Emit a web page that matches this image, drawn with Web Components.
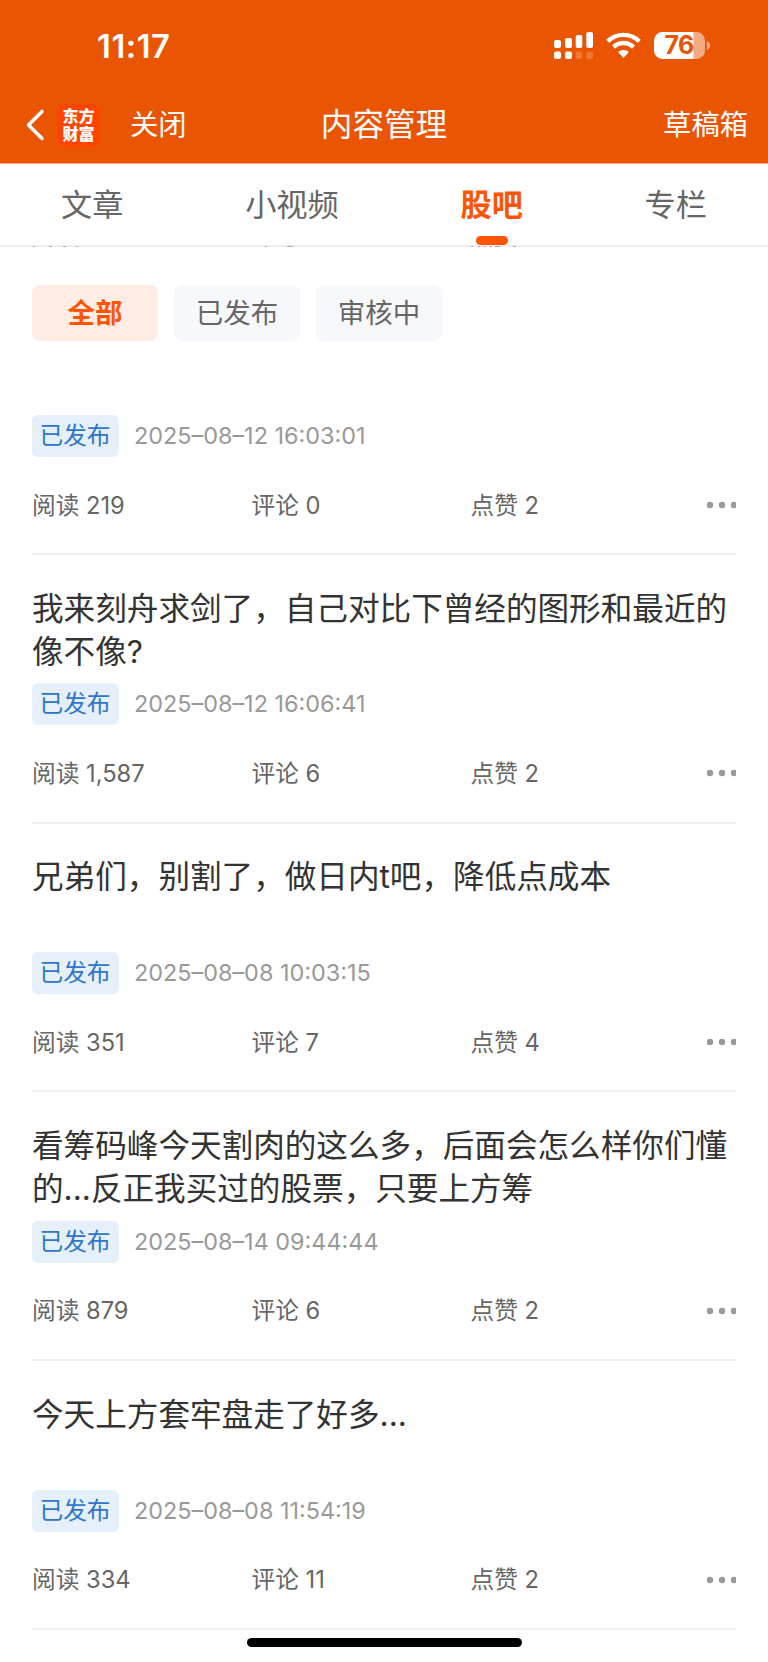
<!DOCTYPE html>
<html lang="zh-CN">
<head>
<meta charset="utf-8">
<meta name="viewport" content="width=device-width, initial-scale=1">
<title>内容管理</title>
<style>
  body {
    margin: 0;
    background: #fff;
    font-family: Inter, "Noto Sans CJK SC", sans-serif;
    color: #333;
  }
</style>
</head>
<body>
<content-manager></content-manager>

<script>
/**
 * Base class: clones the static `html` of the subclass into an open shadow root.
 */
class BaseElement extends HTMLElement {
  constructor() {
    super();
    this.attachShadow({ mode: "open" });
    const template = document.createElement("template");
    template.innerHTML = this.constructor.html;
    this.shadowRoot.appendChild(template.content.cloneNode(true));
  }
}

/** Clock, signal, wifi and battery. */
class StatusBar extends BaseElement {
  static html = `
    <style>
      :host {
        display: flex;
        justify-content: space-between;
        align-items: center;
        height: 90px;
        padding: 0 56px 0 97px;
        box-sizing: border-box;
        color: #fff;
      }
      .time { font-size: 32.600px; font-weight: 600; line-height: 40px; letter-spacing: 0.600px; padding-top: 1px; }
      svg { display: block; }
    </style>
    <span class="time">11:17</span>
    <svg width="158" height="28" viewBox="0 0 158 28" fill="#fff">
      <rect x="-1" y="9" width="7" height="8" rx="2" transform="translate(1)"/>
      <rect x="11" y="7" width="7" height="10" rx="2"/>
      <rect x="21.700" y="4" width="6.600" height="13" rx="2"/>
      <rect x="32.300" y="1" width="6.700" height="16" rx="2"/>
      <rect x="0" y="20.500" width="7" height="7.500" rx="2"/>
      <rect x="11" y="20.500" width="7" height="7.500" rx="2"/>
      <rect x="21.700" y="20.500" width="6.600" height="7.500" rx="2" opacity=".2"/>
      <rect x="32.300" y="20.500" width="6.700" height="7.500" rx="2" opacity=".2"/>
      <g fill="none" stroke="#fff" stroke-width="4.400">
        <path d="M53.700 10.400a22.400 22.400 0 0 1 31.600 0"/>
        <path d="M59.500 16.100a14.200 14.200 0 0 1 20 0"/>
      </g>
      <path d="M64.100 21.100a7.800 7.800 0 0 1 10.800 0L69.500 26.900z"/>
      <path d="M108.500 1h31v27h-31a8.500 8.500 0 0 1-8.500-8.500v-10a8.500 8.500 0 0 1 8.500-8.500z"/>
      <path d="M139 1h3.500a8.500 8.500 0 0 1 8.500 8.500v10a8.500 8.500 0 0 1-8.500 8.500h-3.500z" opacity=".5"/>
      <path d="M152.800 10c4.400 1.500 4.400 7.500 0 9z" opacity=".5"/>
      <text x="125" y="23.300" text-anchor="middle" font-family="Inter" font-size="25" font-weight="700" letter-spacing="-.8" fill="#ea5504">76</text>
    </svg>`;
}

/** Title bar with back button, app badge and the drafts link. */
class NavBar extends BaseElement {
  static html = `
    <style>
      :host {
        display: grid;
        grid-template-columns: 1fr auto 1fr;
        align-items: center;
        height: 73px;
        padding: 0 20px 3px;
        box-sizing: border-box;
        color: #fff;
      }
      .left { display: flex; align-items: center; padding-left: 5px; }
      .back { display: block; margin-right: 12px; }
      .logo {
        width: 43px;
        height: 43px;
        border-radius: 9px;
        background: #ff4400;
        display: grid;
        place-content: center;
        font-size: 16px;
        font-weight: 800;
        line-height: 18px;
        text-align: center;
        margin-right: 30px;
      }
      .text { font-size: 28.300px; line-height: 40px; }
      h1 { margin: 0; font-size: 31.600px; font-weight: 400; line-height: 44px; }
      .right { justify-self: end; }
    </style>
    <div class="left">
      <svg class="back" width="20" height="34" viewBox="0 0 20 34" fill="none" stroke="#fff" stroke-width="3.600" stroke-linecap="round" stroke-linejoin="round">
        <path d="M17 3.500L3.500 17 17 30.500"/>
      </svg>
      <div class="logo"><span>东方</span><span>财富</span></div>
      <span class="text">关闭</span>
    </div>
    <h1><slot></slot></h1>
    <span class="text right">草稿箱</span>`;
}

/** One tab; the `active` attribute gives it the underline. */
class TabItem extends BaseElement {
  static html = `
    <style>
      :host {
        display: flex;
        flex-direction: column;
        align-items: center;
        justify-content: space-between;
        box-sizing: border-box;
        height: 81px;
        padding-top: 19px;
        font-size: 31.200px;
        line-height: 44px;
        color: #666;
      }
      i { display: block; width: 32px; height: 9px; border-radius: 4.500px; }
      :host([active]) { color: #ff5500; font-weight: 700; }
      :host([active]) i { background: #ff5500; }
    </style>
    <span><slot></slot></span>
    <i></i>`;
}

class TabBar extends BaseElement {
  static html = `
    <style>
      :host {
        display: flex;
        justify-content: space-between;
        padding: 0 61px;
        background: #fff;
        border-bottom: 2px solid #eee;
      }
    </style>
    <slot></slot>`;
}

class FilterChip extends BaseElement {
  static html = `
    <style>
      :host {
        display: block;
        width: 126px;
        height: 56px;
        border-radius: 8px;
        background: #f7f8fb;
        color: #666;
        font-size: 27.500px;
        line-height: 56px;
        text-align: center;
      }
      :host([active]) { background: #ffece5; color: #ff5500; font-weight: 700; }
    </style>
    <slot></slot>`;
}

/**
 * One post of the list.
 * Attributes: time, reads, comments, likes, cut (the title is scrolled away).
 */
class PostItem extends BaseElement {
  static html = `
    <style>
      :host {
        display: block;
        box-sizing: border-box;
        height: 268.700px;
        padding-top: 31.600px;
        border-bottom: 2px solid #eee;
      }
      :host([cut]) { height: 140px; padding-top: 0; }
      :host([cut]) .title { display: none; }
      .title {
        height: 86.600px;
        margin-bottom: 10.300px;
        font-size: 31.600px;
        line-height: 43.300px;
        color: #333;
      }
      .meta { display: flex; align-items: center; gap: 15px; height: 42px; }
      .state {
        width: 87px;
        height: 42px;
        border-radius: 6px;
        background: #e5f0fb;
        color: #2e75cc;
        font-size: 23.700px;
        line-height: 41px;
        text-align: center;
        text-indent: -1px;
      }
      .time { font-size: 23.400px; line-height: 42px; color: #999; }
      .stats {
        display: grid;
        grid-template-columns: 219.500px 219px 1fr auto;
        align-items: center;
        height: 40px;
        margin-top: 28px;
        font-size: 23.700px;
        color: #666;
      }
      .stats span { padding-bottom: 3px; }
      svg { display: block; }
    </style>
    <div class="title"><slot></slot></div>
    <div class="meta">
      <span class="state">已发布</span>
      <span class="time"></span>
    </div>
    <div class="stats">
      <span class="reads"></span>
      <span class="comments"></span>
      <span class="likes"></span>
      <svg width="30" height="8" viewBox="0 0 30 8" fill="#999">
        <circle cx="4" cy="4" r="3.200"/>
        <circle cx="16" cy="4" r="3.200"/>
        <circle cx="28" cy="4" r="3.200"/>
      </svg>
    </div>`;

  connectedCallback() {
    const set = (name, label = "") => {
      this.shadowRoot.querySelector("." + name).textContent = label + this.getAttribute(name);
    };
    set("time");
    set("reads", "阅读 ");
    set("comments", "评论 ");
    set("likes", "点赞 ");
  }
}

/** The whole screen. */
class ContentManager extends BaseElement {
  static html = `
    <style>
      :host { display: block; position: relative; height: 1662px; overflow: hidden; background: #fff; }
      header { background: #ea5504; height: 164px; border-bottom: 1px solid #f5aa82; box-sizing: border-box; }
      .edge { display: block; margin-top: -1px; }
      .filters { display: flex; gap: 16px; padding: 38px 32px 74px; }
      main { padding: 0 32px; }
      .home {
        position: absolute;
        left: 247px;
        bottom: 15px;
        width: 275px;
        height: 9px;
        border-radius: 5px;
        background: #000;
      }
    </style>
    <header>
      <status-bar></status-bar>
      <nav-bar>内容管理</nav-bar>
    </header>
    <tab-bar>
      <tab-item>文章</tab-item>
      <tab-item>小视频</tab-item>
      <tab-item active>股吧</tab-item>
      <tab-item>专栏</tab-item>
    </tab-bar>
    <!-- sliver of the row scrolled under the tabs -->
    <svg class="edge" width="768" height="1" viewBox="0 0 768 1" fill="#aaa">
      <path d="M33 0h2v1h-2zM49 0h3v1h-3zM63 0h3v1h-3zM76 0h2v1h-2zM265 0h2v1h-2zM287 0h6v1h-6zM471 0h2v1h-2zM478 0h2v1h-2zM484 0h2v1h-2zM490 0h2v1h-2zM495 0h5v1h-5zM513 0h3v1h-3z"/>
    </svg>
    <div class="filters">
      <filter-chip active>全部</filter-chip>
      <filter-chip>已发布</filter-chip>
      <filter-chip>审核中</filter-chip>
    </div>
    <main>
      <post-item cut time="2025–08–12 16:03:01" reads="219" comments="0" likes="2"></post-item>
      <post-item time="2025–08–12 16:06:41" reads="1,587" comments="6" likes="2">我来刻舟求剑了，自己对比下曾经的图形和最近的像不像?</post-item>
      <post-item time="2025–08–08 10:03:15" reads="351" comments="7" likes="4">兄弟们，别割了，做日内t吧，降低点成本</post-item>
      <post-item time="2025–08–14 09:44:44" reads="879" comments="6" likes="2">看筹码峰今天割肉的这么多，后面会怎么样你们懂的...反正我买过的股票，只要上方筹</post-item>
      <post-item time="2025–08–08 11:54:19" reads="334" comments="11" likes="2">今天上方套牢盘走了好多...</post-item>
    </main>
    <div class="home"></div>`;
}

customElements.define("status-bar", StatusBar);
customElements.define("nav-bar", NavBar);
customElements.define("tab-item", TabItem);
customElements.define("tab-bar", TabBar);
customElements.define("filter-chip", FilterChip);
customElements.define("post-item", PostItem);
customElements.define("content-manager", ContentManager);
</script>
</body>
</html>
